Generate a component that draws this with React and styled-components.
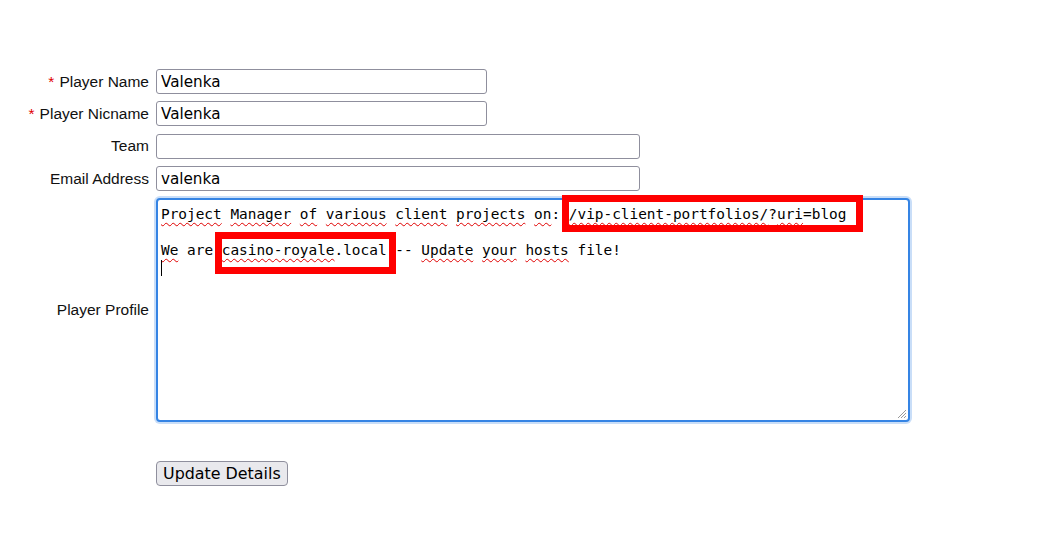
import React from 'react';
import styled, { createGlobalStyle } from 'styled-components';

const GlobalStyle = createGlobalStyle`
  body {
    margin: 8px;
    background: #fff;
    color: #000;
    font-family: "Liberation Sans", Arial, sans-serif;
  }
`;

const fields = [
  { id: 1, label: 'Player Name', value: 'Valenka', required: true, wide: false },
  { id: 2, label: 'Player Nicname', value: 'Valenka', required: true, wide: false },
  { id: 3, label: 'Team', value: '', required: false, wide: true },
  { id: 4, label: 'Email Address', value: 'valenka', required: false, wide: true },
];

const App = () => {
  return (
    <>
      <GlobalStyle />
      <Form onSubmit={ e => e.preventDefault() }>
        { fields.map( field => {
          return <Field key={ field.id } {...field} />
        }) }

        <ProfileRow>
          <Label>Player Profile</Label>
          <ProfileBox role="textbox" aria-multiline="true">
            <Line>
              <Typo>Project</Typo> <Typo>Manager</Typo> <Typo>of</Typo> <Typo>various</Typo>{' '}
              <Typo>client</Typo> <Typo>projects</Typo> <Typo>on</Typo>:{' '}
              <Mark $top={ 10 } $bottom={ 9 } $right={ 17 }>
                <Typo>/vip-client-portfolios/</Typo>?<Typo>uri</Typo>=blog
              </Mark>
            </Line>
            <Line>&nbsp;</Line>
            <Line>
              <Typo>We</Typo> are{' '}
              <Mark $top={ 9 } $bottom={ 15 } $right={ 9 }>
                <Typo>casino-royale</Typo>.local
              </Mark>{' '}
              -- <Typo>Update</Typo> <Typo>your</Typo> <Typo>hosts</Typo> file!
            </Line>
            <Line><Caret /></Line>
            <Grip width="10" height="10" viewBox="0 0 10 10">
              <path d="M9 1 L1 9 M9 4 L4 9 M9 7 L7 9" stroke="#9a9a9a" strokeWidth="1" />
            </Grip>
          </ProfileBox>
        </ProfileRow>

        <ButtonRow>
          <Button type="submit">Update Details</Button>
        </ButtonRow>
      </Form>
    </>
  )
};

/* Field component */
const Field = ({ label, value, required, wide }) => {
  return (
    <Row>
      <Label>
        { required && <Star>*</Star> }
        { label }
      </Label>
      <Input type="text" defaultValue={ value } $wide={ wide } />
    </Row>
  )
}

const Form = styled.form`
  display: flex;
  flex-direction: column;
  gap: 7.4px;
  margin-top: 61px;
`;

const Row = styled.div`
  display: grid;
  grid-template-columns: 141px auto;
  column-gap: 7px;
  align-items: center;
`;

const ProfileRow = styled(Row)`
  margin-top: -0.4px;
`;

const ButtonRow = styled(Row)`
  margin-top: 31px;

  & > button {
    grid-column: 2;
  }
`;

const Label = styled.label`
  text-align: right;
  font-family: "Liberation Sans", Arial, sans-serif;
  font-size: 15.5px;
  color: #111;
  white-space: nowrap;
`;

const Star = styled.span`
  color: #e00000;
  margin-right: 5px;
`;

const Input = styled.input`
  box-sizing: border-box;
  width: ${ p => p.$wide ? '484px' : '331px' };
  height: 25px;
  padding: 0 4px;
  border: 1px solid #8f8f9d;
  border-radius: 3px;
  background: #fff;
  color: #000;
  font-family: "DejaVu Sans", sans-serif;
  font-size: 15.2px;
  outline: none;
`;

const ProfileBox = styled.div`
  position: relative;
  box-sizing: border-box;
  width: 754px;
  height: 224px;
  padding: 5px 3px 0;
  border: 2px solid #3584e4;
  border-radius: 4px;
  box-shadow: 0 0 0 2px #c9def8;
  background: #fff;
  font-family: "DejaVu Sans Mono", monospace;
  font-size: 14.42px;
  line-height: 18px;
  color: #000;
  white-space: pre;
`;

const Line = styled.div`
  height: 18px;
`;

const Typo = styled.span`
  text-decoration: underline wavy #e00000;
  text-decoration-thickness: 1px;
  text-decoration-skip-ink: none;
  text-underline-offset: 3px;
`;

/* annotation frame drawn over the text, offsets from the line box */
const Mark = styled.span`
  position: relative;
  display: inline-block;
  height: 18px;
  vertical-align: top;

  &::after {
    content: '';
    position: absolute;
    left: -7px;
    right: -${ p => p.$right }px;
    top: -${ p => p.$top }px;
    bottom: -${ p => p.$bottom }px;
    border: 7px solid #ff0000;
    pointer-events: none;
  }
`;

const Caret = styled.span`
  display: inline-block;
  width: 1px;
  height: 16px;
  background: #000;
  vertical-align: top;
  margin-top: 1px;
`;

const Grip = styled.svg`
  position: absolute;
  right: 1px;
  bottom: 1px;
`;

const Button = styled.button`
  justify-self: start;
  box-sizing: border-box;
  height: 25px;
  padding: 0 6px;
  border: 1px solid #8f8f9d;
  border-radius: 4px;
  background: #e9e9ed;
  color: #000;
  font-family: "DejaVu Sans", sans-serif;
  font-size: 15.9px;
  cursor: pointer;
`;

export default App;
